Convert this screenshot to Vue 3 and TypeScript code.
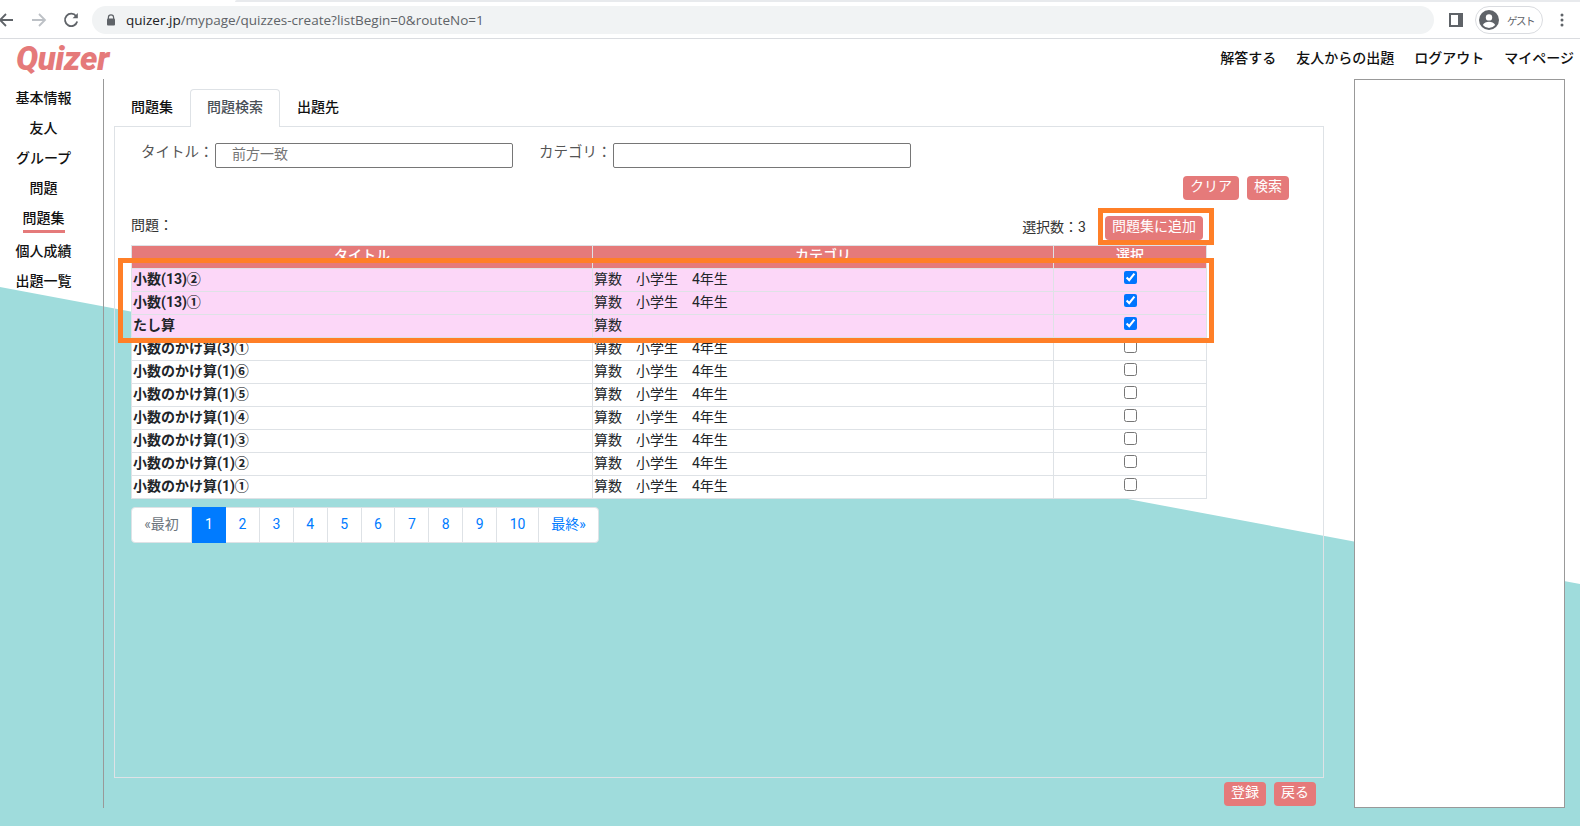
<script setup lang="ts">
import { ref } from 'vue'

interface Row {
  title: string
  category: string
  checked: boolean
}

const sideItems = ['基本情報', '友人', 'グループ', '問題', '問題集', '個人成績', '出題一覧']
const topLinks = ['解答する', '友人からの出題', 'ログアウト', 'マイページ']
const pages = ['2', '3', '4', '5', '6', '7', '8', '9', '10']

const rows = ref<Row[]>([
  { title: '小数(13)②', category: '算数　小学生　4年生', checked: true },
  { title: '小数(13)①', category: '算数　小学生　4年生', checked: true },
  { title: 'たし算', category: '算数', checked: true },
  { title: '小数のかけ算(3)①', category: '算数　小学生　4年生', checked: false },
  { title: '小数のかけ算(1)⑥', category: '算数　小学生　4年生', checked: false },
  { title: '小数のかけ算(1)⑤', category: '算数　小学生　4年生', checked: false },
  { title: '小数のかけ算(1)④', category: '算数　小学生　4年生', checked: false },
  { title: '小数のかけ算(1)③', category: '算数　小学生　4年生', checked: false },
  { title: '小数のかけ算(1)②', category: '算数　小学生　4年生', checked: false },
  { title: '小数のかけ算(1)①', category: '算数　小学生　4年生', checked: false },
])
</script>

<template>
  <div class="page">
    <div class="teal"></div>

    <div class="chrome">
      <div class="strip"></div>
      <div class="toolbar">
        <svg class="nav-icon back" width="16" height="16" viewBox="0 0 16 16" fill="none" stroke="#5f6368" stroke-width="1.8">
          <path d="M15 8H2M8 2L2 8l6 6" />
        </svg>
        <svg class="nav-icon forward" width="16" height="16" viewBox="0 0 16 16" fill="none" stroke="#bdc1c6" stroke-width="1.8">
          <path d="M1 8h13M8 2l6 6-6 6" />
        </svg>
        <svg class="nav-icon reload" width="16" height="16" viewBox="0 0 16 16" fill="none">
          <path d="M13.2 4.2A6.2 6.2 0 1 0 14.2 9.5" stroke="#5f6368" stroke-width="1.8" />
          <path d="M14.8 1v5.2H9.6z" fill="#5f6368" />
        </svg>
        <div class="omnibox">
          <svg class="lock" width="10" height="12" viewBox="0 0 10 12">
            <path d="M2.4 5V3.4a2.6 2.6 0 0 1 5.2 0V5" fill="none" stroke="#5f6368" stroke-width="1.2" />
            <rect x="1" y="4.6" width="8" height="7" rx="1" fill="#5f6368" />
          </svg>
          <span class="url"><span class="host">quizer.jp</span>/mypage/quizzes-create?listBegin=0&amp;routeNo=1</span>
        </div>
        <svg class="panel-icon" width="14" height="14" viewBox="0 0 14 14">
          <path d="M0 0h14v14H0zM2 2v10h7V2z" fill="#5f6368" fill-rule="evenodd" />
        </svg>
        <div class="profile">
          <svg width="20" height="20" viewBox="0 0 20 20">
            <circle cx="10" cy="10" r="10" fill="#5f6368" />
            <circle cx="10" cy="7.4" r="3.2" fill="#fff" />
            <path d="M3.8 15c1.3-2.3 3.6-3.3 6.2-3.3s4.9 1 6.2 3.3A8 8 0 0 1 10 18a8 8 0 0 1-6.2-3z" fill="#fff" />
          </svg>
          <span class="guest">ゲスト</span>
        </div>
        <svg class="dots" width="4" height="14" viewBox="0 0 4 14" fill="#5f6368">
          <circle cx="2" cy="2" r="1.5" />
          <circle cx="2" cy="7" r="1.5" />
          <circle cx="2" cy="12" r="1.5" />
        </svg>
      </div>
    </div>

    <header class="site-head">
      <span class="logo">Quizer</span>
      <nav class="top-nav">
        <a v-for="link in topLinks" :key="link">{{ link }}</a>
      </nav>
    </header>

    <div class="main">
      <aside class="sidebar">
        <div v-for="item in sideItems" :key="item" class="side-item" :class="{ active: item === '問題集' }">
          <span>{{ item }}</span>
        </div>
      </aside>

      <section class="content">
        <div class="tabs">
          <span class="tab">問題集</span>
          <span class="tab active">問題検索</span>
          <span class="tab">出題先</span>
        </div>

        <div class="panel">
          <div class="search-row">
            <label class="field-label">タイトル：</label>
            <input class="field" type="text" placeholder="前方一致" />
            <label class="field-label second">カテゴリ：</label>
            <input class="field" type="text" />
          </div>

          <div class="search-actions">
            <button class="btn">クリア</button>
            <button class="btn">検索</button>
          </div>

          <div class="list-head">
            <span class="list-label">問題：</span>
            <span class="count">選択数：3</span>
            <button class="btn">問題集に追加</button>
          </div>

          <table class="quiz-table">
            <colgroup>
              <col class="col-title" />
              <col class="col-category" />
              <col />
            </colgroup>
            <thead>
              <tr>
                <th>タイトル</th>
                <th>カテゴリ</th>
                <th>選択</th>
              </tr>
            </thead>
            <tbody>
              <tr v-for="row in rows" :key="row.title" :class="{ picked: row.checked }">
                <td class="title-cell">{{ row.title }}</td>
                <td>{{ row.category }}</td>
                <td class="check-cell"><input v-model="row.checked" type="checkbox" /></td>
              </tr>
            </tbody>
          </table>

          <div class="pager">
            <span class="page-link first">«最初</span>
            <span class="page-link current">1</span>
            <span v-for="p in pages" :key="p" class="page-link" :class="{ wide: p === '10' }">{{ p }}</span>
            <span class="page-link last">最終»</span>
          </div>
        </div>

        <div class="form-actions">
          <button class="btn">登録</button>
          <button class="btn">戻る</button>
        </div>
      </section>

      <aside class="ad-box"></aside>
    </div>

    <!-- annotation rectangles drawn over the screenshot -->
    <div class="mark mark-button"></div>
    <div class="mark mark-rows"></div>
  </div>
</template>

<style scoped>
.page {
  position: relative;
  width: 1580px;
  height: 826px;
  overflow: hidden;
  background: #fff;
  color: #212529;
  font-family: Roboto, "Noto Sans CJK JP", sans-serif;
  font-size: 14px;
}

.teal {
  position: absolute;
  inset: 0;
  background: #9fdcdc;
  clip-path: polygon(0 287px, 1580px 584px, 1580px 826px, 0 826px);
}

.chrome {
  position: relative;
  height: 38px;
  background: #fff;
  border-bottom: 1px solid #dadce0;
}
.strip {
  height: 2px;
  margin-left: 235px;
  background: #e8eaed;
  border-top-left-radius: 2px;
}
.toolbar {
  display: flex;
  align-items: center;
  height: 36px;
}
.nav-icon {
  flex: none;
}
.back {
  margin-left: -2px;
}
.forward {
  margin-left: 17px;
}
.reload {
  margin-left: 16px;
}
.omnibox {
  display: flex;
  align-items: center;
  width: 1342px;
  height: 28px;
  margin-left: 13px;
  padding-left: 14px;
  box-sizing: border-box;
  background: #f1f3f4;
  border-radius: 14px;
}
.url {
  margin-left: 10px;
  font-family: "Open Sans", sans-serif;
  font-size: 13.53px;
  color: #5f6368;
  white-space: nowrap;
}
.host {
  color: #202124;
}
.panel-icon {
  margin-left: 15px;
}
.profile {
  display: flex;
  align-items: center;
  width: 68px;
  height: 28px;
  margin-left: 12px;
  padding-left: 3px;
  box-sizing: border-box;
  border: 1px solid #dadce0;
  border-radius: 14px;
}
.guest {
  margin-left: 8px;
  font-size: 10.5px;
  color: #5f6368;
  letter-spacing: -1.5px;
}
.dots {
  margin-left: 17px;
}

.site-head {
  position: relative;
  display: flex;
  justify-content: space-between;
  align-items: center;
  height: 40px;
  padding: 0 6px 0 16px;
}
.logo {
  font-family: Roboto, sans-serif;
  font-weight: 900;
  font-style: italic;
  font-size: 33px;
  line-height: 40px;
  letter-spacing: -0.3px;
  color: #e57a7a;
}
.top-nav {
  display: flex;
  gap: 20px;
  margin-top: -5px;
  font-weight: 500;
  color: #111;
}

.main {
  position: relative;
  display: flex;
  height: 729px;
}
.sidebar {
  flex: none;
  width: 104px;
  padding: 4px 16px 0 0;
  box-sizing: border-box;
  border-right: 1px solid #999;
}
.side-item {
  height: 30px;
  line-height: 30px;
  text-align: center;
  font-weight: 500;
  color: #111;
}
.side-item.active {
  height: 33px;
}
.side-item.active span {
  display: inline-block;
  height: 27px;
  line-height: 30px;
  border-bottom: 3px solid #e57a7a;
}

.content {
  width: 1210px;
  margin-left: 10px;
  flex: none;
}
.tabs {
  display: flex;
  height: 38px;
  margin: 10px 0 -1px;
  position: relative;
  z-index: 1;
}
.tab {
  padding: 0 16px;
  line-height: 34px;
  font-weight: 500;
  border: 1px solid transparent;
  border-bottom: none;
  color: #111;
}
.tab.active {
  background: #fff;
  color: #495057;
  border-color: #dee2e6;
  border-radius: 4px 4px 0 0;
}
.panel {
  height: 652px;
  box-sizing: border-box;
  padding: 16px 116px 0 16px;
  border: 1px solid #dee2e6;
}

.search-row {
  display: flex;
  align-items: flex-start;
  height: 25px;
  padding-left: 10px;
}
.field-label {
  width: 74px;
  font-size: 14.5px;
  line-height: 20px;
  color: #555;
  white-space: nowrap;
}
.field-label.second {
  margin-left: 26px;
}
.field {
  width: 298px;
  height: 25px;
  box-sizing: border-box;
  padding: 0 16px 3px;
  border: 1px solid #767676;
  border-radius: 2px;
  background: #fff;
  font-family: inherit;
  font-size: 14px;
  outline: none;
}
.field::placeholder {
  color: #757575;
}

.btn {
  height: 24px;
  padding: 0 7px 3px;
  border: none;
  border-radius: 4px;
  background: #e57a7a;
  color: #fff;
  font-family: inherit;
  font-size: 14px;
  line-height: 21px;
  white-space: nowrap;
}

.search-actions {
  display: flex;
  justify-content: flex-end;
  gap: 8px;
  height: 24px;
  margin-top: 8px;
  margin-right: -82px;
}

.list-head {
  display: flex;
  align-items: center;
  height: 24px;
  margin-top: 16px;
  padding-right: 4px;
}
.list-label {
  flex: 1;
  color: #333;
  margin-top: -8px;
}
.count {
  margin-right: 19px;
  color: #333;
  margin-top: -5px;
}

.quiz-table {
  width: 1076px;
  margin-top: 5px;
  border-collapse: collapse;
  table-layout: fixed;
  background: #fff;
}
.col-title {
  width: 461px;
}
.col-category {
  width: 461px;
}
.quiz-table th,
.quiz-table td {
  height: 23px;
  padding: 0 1px 2px;
  box-sizing: border-box;
  border: 1px solid #dee2e6;
  font-size: 14px;
  line-height: 18px;
  white-space: nowrap;
  overflow: hidden;
}
.quiz-table th {
  padding-bottom: 4px;
  background: #e57a7a;
  color: #fff;
  font-weight: 500;
  text-align: center;
}
.title-cell {
  font-weight: 700;
}
.check-cell {
  text-align: center;
}
.check-cell input {
  display: block;
  width: 13px;
  height: 13px;
  margin: -4px auto 0;
}
.picked td {
  background: #fcd7f8;
}

.pager {
  display: flex;
  width: 468px;
  height: 36px;
  margin-top: 8px;
  background: #fff;
  border: 1px solid #dee2e6;
  border-radius: 4px;
  box-sizing: border-box;
}
.page-link {
  flex: none;
  width: 33.9px;
  box-sizing: border-box;
  border-right: 1px solid #dee2e6;
  font-size: 14px;
  line-height: 33px;
  text-align: center;
  color: #007bff;
}
.page-link.first {
  width: 60px;
  color: #6c757d;
}
.page-link.current {
  width: 34px;
  height: 36px;
  margin: -1px 0;
  background: #007bff;
  color: #fff;
  line-height: 35px;
  border-right: none;
}
.page-link.wide {
  width: 42px;
}
.page-link.last {
  flex: 1;
  border-right: none;
}

.form-actions {
  display: flex;
  justify-content: flex-end;
  gap: 8px;
  margin-top: 4px;
  padding-right: 8px;
}

.ad-box {
  flex: none;
  width: 211px;
  height: 729px;
  margin-left: 30px;
  box-sizing: border-box;
  background: #fff;
  border: 1px solid #999;
}

.mark {
  position: absolute;
  box-sizing: border-box;
  border: 5px solid #ff7f27;
  pointer-events: none;
}
.mark-button {
  left: 1098px;
  top: 208px;
  width: 116px;
  height: 37px;
}
.mark-rows {
  left: 118px;
  top: 258px;
  width: 1096px;
  height: 85px;
}
</style>
